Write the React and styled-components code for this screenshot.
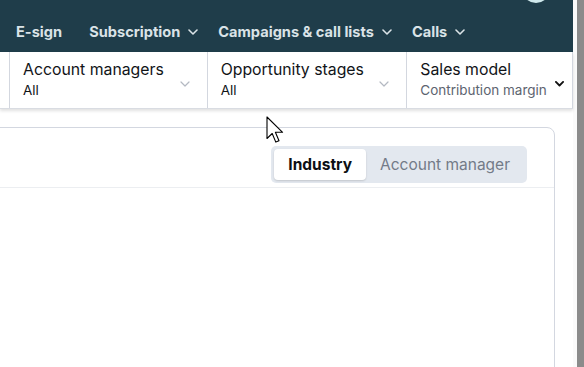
import React from 'react';
import styled, { createGlobalStyle } from 'styled-components';

const GlobalStyle = createGlobalStyle`
	html, body {
		margin: 0;
		padding: 0;
		background: #ffffff;
		overflow: hidden;
	}
	body {
		font-family: Inter, "Liberation Sans", sans-serif;
	}
`;

const Page = styled.div`
	position: relative;
	display: flex;
	width: 584px;
	height: 367px;
	overflow: hidden;
`;

const Main = styled.div`
	width: 573px;
	display: flex;
	flex-direction: column;
`;

const Track = styled.div`
	width: 4px;
	background: #fafafa;
`;

const Thumb = styled.div`
	width: 7px;
	background: #8b8b8b;
`;

const NavBar = styled.nav`
	position: relative;
	height: 52px;
	flex-shrink: 0;
	box-sizing: border-box;
	padding: 12px 0 0 16px;
	background: #1f3d4a;
	display: flex;
	align-items: center;
	gap: 20px;
`;

const NavItem = styled.div`
	display: flex;
	align-items: center;
	gap: 8px;
	margin-right: ${(p) => p.$extra || 0}px;
	color: #dae3e7;
	font-size: 14.6px;
	font-weight: 700;
`;

const Avatar = styled.div`
	position: absolute;
	left: 522px;
	top: -25px;
	width: 28px;
	height: 28px;
	border-radius: 50%;
	background: #cfe8ec;
`;

const FilterBar = styled.div`
	height: 56px;
	flex-shrink: 0;
	display: flex;
	background: #fff;
	border-bottom: 1px solid #d9dce2;
	box-shadow: 0 2px 3px rgba(0, 0, 0, 0.12);
	position: relative;
	z-index: 1;
`;

const Stub = styled.div`
	width: 9px;
	border-right: 1px solid #d3d7df;
`;

const Filter = styled.div`
	width: ${(p) => p.$w}px;
	box-sizing: border-box;
	padding: 8px ${(p) => p.$pr}px 0 13px;
	border-right: 1px solid #d3d7df;
	display: flex;
	align-items: center;
	justify-content: space-between;
`;

const FilterText = styled.div`
	display: flex;
	flex-direction: column;
	align-self: flex-start;
`;

const FilterLabel = styled.div`
	font-size: 15.8px;
	line-height: 20px;
	color: #111418;
	white-space: nowrap;
`;

const FilterValue = styled.div`
	font-size: 13.5px;
	line-height: 17px;
	margin-top: 2px;
	color: ${(p) => (p.$muted ? '#5d6470' : '#111418')};
	white-space: nowrap;
`;

const Content = styled.div`
	flex: 1;
	padding-top: 18px;
	padding-right: 18px;
`;

const Card = styled.div`
	margin-left: -20px;
	height: 300px;
	border: 1px solid #d3d7e0;
	border-radius: 8px;
	background: #fff;
`;

const CardHeader = styled.div`
	display: flex;
	justify-content: flex-end;
	padding: 18px 27px 4px 0;
	border-bottom: 1px solid #eceef1;
`;

const Toggle = styled.div`
	display: flex;
	padding: 3px;
	border-radius: 5px;
	background: #e3e8ef;
`;

const ToggleButton = styled.div`
	height: 31px;
	box-sizing: border-box;
	padding: 0 14px;
	display: flex;
	align-items: center;
	border-radius: 4px;
	font-size: 15.5px;
	font-weight: ${(p) => (p.$active ? 700 : 400)};
	color: ${(p) => (p.$active ? '#0c0f14' : '#737b88')};
	background: ${(p) => (p.$active ? '#fff' : 'transparent')};
	box-shadow: ${(p) => (p.$active ? '0 1px 2px rgba(0,0,0,0.15)' : 'none')};
`;

const Cursor = styled.svg`
	position: absolute;
	left: 266px;
	top: 116px;
	z-index: 5;
`;

function Chevron({ color = '#dae3e7', width = 1.6, size = 10 }) {
	return (
		<svg width={size} height={size * 0.6} viewBox="0 0 10 6" fill="none">
			<path d="M1 1l4 4 4-4" stroke={color} strokeWidth={width} strokeLinecap="round" strokeLinejoin="round" />
		</svg>
	);
}

const navItems = [
	{ label: 'E-sign', menu: false, extra: 7 },
	{ label: 'Subscription', menu: true },
	{ label: 'Campaigns & call lists', menu: true },
	{ label: 'Calls', menu: true },
];

export default function App() {
	return (
		<>
			<GlobalStyle />
			<Page>
				<Main>
					<NavBar>
						<Avatar />
						{navItems.map((item) => (
							<NavItem key={item.label} $extra={item.extra}>
								{item.label}
								{item.menu && <Chevron />}
							</NavItem>
						))}
					</NavBar>
					<FilterBar>
						<Stub />
						<Filter $w={198} $pr={17}>
							<FilterText>
								<FilterLabel>Account managers</FilterLabel>
								<FilterValue>All</FilterValue>
							</FilterText>
							<Chevron color="#b4b9c2" width={1.2} />
						</Filter>
						<Filter $w={200} $pr={17}>
							<FilterText>
								<FilterLabel>Opportunity stages</FilterLabel>
								<FilterValue>All</FilterValue>
							</FilterText>
							<Chevron color="#b4b9c2" width={1.2} />
						</Filter>
						<Filter $w={166} $pr={8}>
							<FilterText>
								<FilterLabel>Sales model</FilterLabel>
								<FilterValue $muted>Contribution margin</FilterValue>
							</FilterText>
							<Chevron color="#111" width={2} size={9} />
						</Filter>
					</FilterBar>
					<Content>
						<Card>
							<CardHeader>
								<Toggle>
									<ToggleButton $active>Industry</ToggleButton>
									<ToggleButton>Account manager</ToggleButton>
								</Toggle>
							</CardHeader>
						</Card>
					</Content>
				</Main>
				<Track />
				<Thumb />
				<Cursor width="18" height="28" viewBox="0 0 18 28">
					<path d="M1 1v21.5l5.2-5 3.6 8.6 3.2-1.4-3.6-8.4h7.2z" fill="#fff" stroke="#000" strokeWidth="1.1" strokeLinejoin="round" />
				</Cursor>
			</Page>
		</>
	);
}
